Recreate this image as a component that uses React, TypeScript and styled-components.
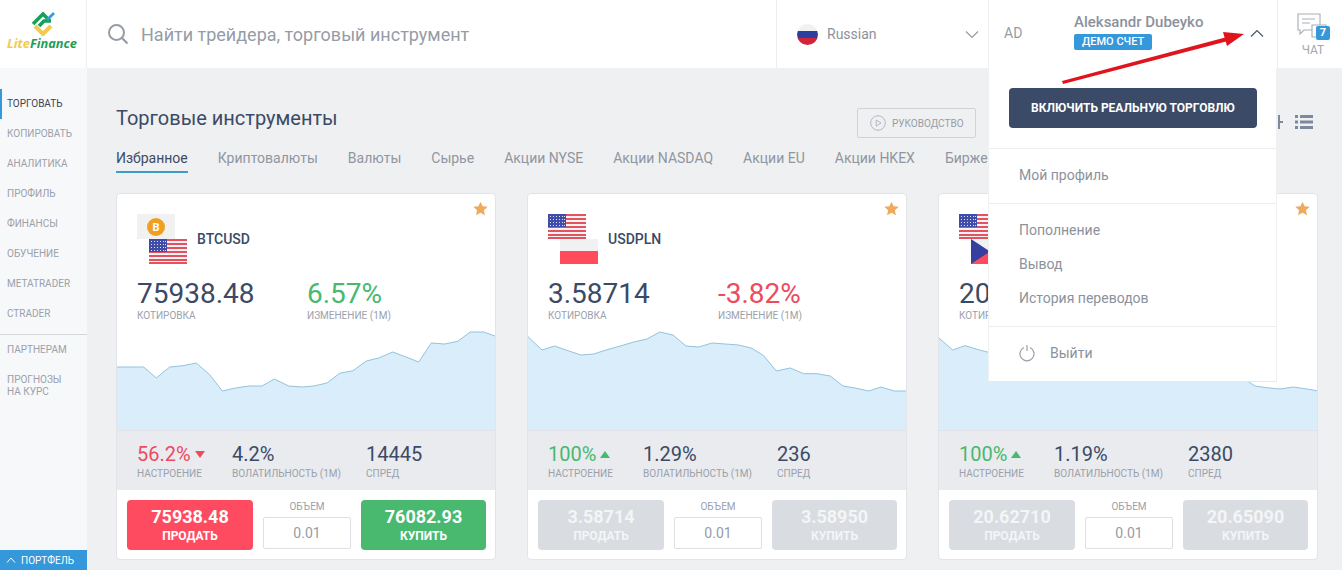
import React from "react";
import styled, { createGlobalStyle } from "styled-components";

const Global = createGlobalStyle`
  html, body { margin: 0; padding: 0; background: #fff; overflow: hidden; }
  * { box-sizing: border-box; }
  body { font-family: Roboto, "Liberation Sans", sans-serif; color: #3b4a66; }
`;

const Shell = styled.div`
  position: relative;
  width: 1342px;
  height: 570px;
  display: flex;
  flex-direction: column;
  overflow: hidden;
`;
const Header = styled.header`
  height: 68px;
  flex: none;
  display: flex;
  background: #fff;
  position: relative;
  z-index: 3;
`;
const LogoCell = styled.div`
  width: 87px;
  flex: none;
  border-right: 1px solid #eceef0;
  display: flex;
  flex-direction: column;
  align-items: center;
  padding-top: 11px;
`;
const LogoText = styled.div`
  font: italic 700 12.8px/13px "Open Sans", sans-serif;
  margin-top: 1px;
  margin-left: -2px;
  color: #1f9d57;
  span { color: #f3c94e; }
`;
const Search = styled.div`
  flex: 1;
  display: flex;
  align-items: center;
  padding-left: 20px;
  gap: 12px;
  font-size: 18px;
  color: #969ca6;
`;
const LangCell = styled.div`
  width: 212px;
  flex: none;
  border-left: 1px solid #eceef0;
  display: flex;
  align-items: center;
  padding-left: 20px;
  font-size: 14px;
  color: #8b929c;
`;
const LangFlag = styled.div`
  width: 21px;
  height: 21px;
  border-radius: 50%;
  margin-right: 9px;
  background: linear-gradient(#f1f1f3 0 33%, #2b3f9e 33% 66%, #d3243c 66%);
`;
const Chevron = styled.svg`
  width: 14px;
  height: 9px;
  flex: none;
`;
const LangChevron = styled(Chevron)`
  margin-left: auto;
  margin-right: 9px;
`;
const UserCell = styled.div`
  position: relative;
  width: 289px;
  flex: none;
  border-left: 1px solid #eceef0;
  display: flex;
  align-items: center;
  padding-left: 15px;
  font-size: 14px;
  color: #969ca6;
`;
const Initials = styled.div`
  width: 70px;
  flex: none;
  margin-top: -2px;
`;
const UserInfo = styled.div`
  display: flex;
  flex-direction: column;
  align-items: flex-start;
  margin-top: -5px;
`;
const UserName = styled.div`
  font-weight: 500;
  font-size: 15px;
  line-height: 18px;
  color: #8b929c;
`;
const Badge = styled.div`
  margin-top: 3px;
  background: #3498db;
  color: #fff;
  font-size: 11px;
  font-weight: 500;
  line-height: 16px;
  height: 16px;
  padding: 0 8px;
  border-radius: 2px;
`;
const UserChevron = styled(Chevron)`
  margin-left: auto;
  margin-right: 13px;
  margin-top: -2px;
`;
const ChatCell = styled.div`
  width: 65px;
  flex: none;
  border-left: 1px solid #eceef0;
  display: flex;
  flex-direction: column;
  align-items: center;
  padding: 13px 0 0 6px;
  font-size: 12px;
  color: #a2a8b1;
  line-height: 14px;
`;
const ChatIcon = styled.div`
  position: relative;
  align-self: flex-start;
  width: 34px;
  height: 28px;
  margin-left: 12px;
  margin-bottom: 2px;
  svg { display: block; }
`;
const ChatCount = styled.div`
  position: absolute;
  right: 0;
  bottom: 1px;
  width: 14px;
  height: 14px;
  border-radius: 2px;
  background: #3498db;
  color: #fff;
  font-size: 11px;
  font-weight: 700;
  line-height: 14px;
  text-align: center;
`;
const Dropdown = styled.div`
  position: absolute;
  top: 100%;
  left: -1px;
  right: 0;
  height: 314px;
  background: #fff;
  border: 1px solid #eef0f2;
  border-bottom-color: #e7e9ec;
  border-top: 0;
  display: flex;
  flex-direction: column;
`;
const DropSection = styled.div<{ $h: number }>`
  height: ${(p) => p.$h}px;
  flex: none;
  border-bottom: 1px solid #eceef0;
  padding: 0 30px 2px;
  display: flex;
  flex-direction: column;
  justify-content: center;
  gap: 14px;
  &:last-child { border-bottom: 0; }
`;
const RealButton = styled.div`
  margin: 20px 19px 0 20px;
  height: 40px;
  flex: none;
  background: #3b4a66;
  border-radius: 4px;
  color: #fff;
  font-size: 12px;
  font-weight: 700;
  display: flex;
  align-items: center;
  justify-content: center;
`;
const Rule = styled.div`
  height: 1px;
  background: #eceef0;
  margin-top: 20px;
  flex: none;
`;
const DropItem = styled.div`
  font-size: 14px;
  line-height: 20px;
  color: #8b929c;
  display: flex;
  align-items: center;
  gap: 15px;
`;
const Arrow = styled.svg`
  position: absolute;
  left: 1055px;
  top: 28px;
  width: 195px;
  height: 60px;
  z-index: 5;
`;
const Body = styled.div`
  flex: 1;
  display: flex;
  min-height: 0;
`;
const Sidebar = styled.nav`
  width: 87px;
  flex: none;
  background: #f7f8f9;
  padding-top: 21px;
  display: flex;
  flex-direction: column;
`;
const NavItem = styled.div<{ $active?: boolean; $tall?: boolean }>`
  height: ${(p) => (p.$tall ? 42 : 30)}px;
  padding-left: ${(p) => (p.$active ? 5 : 7)}px;
  border-left: ${(p) => (p.$active ? "2px solid #3498db" : "0")};
  color: ${(p) => (p.$active ? "#3b4454" : "#9aa1ab")};
  font-size: 10px;
  line-height: 12px;
  display: flex;
  align-items: center;
`;
const NavRule = styled.div`
  height: 1px;
  background: #d5d8dc;
  margin: 5px 0 0;
`;
const Portfolio = styled.div`
  margin-top: auto;
  height: 20px;
  background: #3498db;
  color: #fff;
  font-size: 10px;
  display: flex;
  align-items: center;
  padding-left: 6px;
  gap: 5px;
`;
const Main = styled.main`
  flex: 1;
  min-width: 0;
  background: #eff0f1;
  padding: 38px 0 0 29px;
  overflow: hidden;
`;
const Toolbar = styled.div`
  width: 1197px;
  height: 30px;
  display: flex;
  align-items: flex-start;
`;
const Title = styled.h1`
  flex: 1;
  margin: 0;
  font-size: 20px;
  font-weight: 400;
  line-height: 24px;
  color: #3b4a66;
`;
const Guide = styled.div`
  width: 119px;
  height: 30px;
  margin-top: 2px;
  border: 1px solid #cfd3d8;
  border-radius: 2px;
  display: flex;
  align-items: center;
  padding-left: 12px;
  gap: 6px;
  font-size: 10px;
  color: #969ca6;
`;
const ViewIcons = styled.div`
  margin-left: 289px;
  display: flex;
  gap: 12px;
  padding-top: 8px;
`;
const Tabs = styled.div`
  display: flex;
  gap: 30px;
  margin-top: 14px;
  white-space: nowrap;
`;
const Tab = styled.div<{ $active?: boolean }>`
  font-size: 14px;
  line-height: 16px;
  padding-bottom: 5px;
  border-bottom: 2px solid ${(p) => (p.$active ? "#3f9cc9" : "transparent")};
  color: ${(p) => (p.$active ? "#3b4a66" : "#8f96a1")};
`;
const Cards = styled.div`
  display: flex;
  gap: 31px;
  margin-top: 20px;
`;
const Card = styled.article`
  position: relative;
  width: 380px;
  height: 367px;
  flex: none;
  background: #fff;
  border: 1px solid #e2e4e7;
  border-radius: 4px;
  display: flex;
  flex-direction: column;
  overflow: hidden;
`;
const Star = styled.svg`
  position: absolute;
  top: 7px;
  right: 7px;
  width: 15px;
  height: 15px;
`;
const CardHead = styled.div`
  display: flex;
  align-items: center;
  gap: 10px;
  padding: 20px 0 0 20px;
`;
const FlagStack = styled.div`
  width: 50px;
  height: 50px;
  display: flex;
  flex-direction: column;
  svg { display: block; }
  svg:last-child { align-self: flex-end; }
`;
const Symbol = styled.div`
  font-size: 14px;
  font-weight: 500;
  color: #3b4a66;
`;
const QuoteRow = styled.div`
  display: flex;
  padding: 14px 0 0 20px;
`;
const Quote = styled.div<{ $w: number }>`
  width: ${(p) => p.$w}px;
  flex: none;
`;
const Big = styled.div<{ $tone?: string }>`
  font-size: 28px;
  line-height: 32px;
  color: ${(p) => p.$tone || "#3b4a66"};
`;
const Small = styled.div`
  font-size: 10px;
  line-height: 12px;
  color: #9aa1ab;
  white-space: nowrap;
`;
const Chart = styled.svg`
  display: block;
  width: 378px;
  height: 100px;
  margin-top: 8px;
  flex: none;
`;
const Stats = styled.div`
  height: 60px;
  flex: none;
  background: #e9ebee;
  border-top: 1px solid #dfe2e6;
  display: flex;
  padding: 12px 0 0 20px;
`;
const Value = styled.div<{ $tone?: string }>`
  font-size: 20px;
  line-height: 22px;
  color: ${(p) => p.$tone || "#3b4a66"};
  display: flex;
  align-items: center;
  gap: 4px;
  margin-bottom: 3px;
`;
const Tri = styled.span<{ $up: boolean }>`
  width: 0;
  height: 0;
  border-left: 5px solid transparent;
  border-right: 5px solid transparent;
  ${(p) =>
    p.$up
      ? "border-bottom: 7px solid #48b96f;"
      : "border-top: 7px solid #f04a5e;"}
`;
const Actions = styled.div`
  flex: 1;
  display: flex;
  padding: 10px 10px 0;
  gap: 10px;
`;
const Trade = styled.div<{ $bg: string; $w: number; $off?: boolean }>`
  width: ${(p) => p.$w}px;
  height: 50px;
  flex: none;
  border-radius: 4px;
  background: ${(p) => p.$bg};
  color: ${(p) => (p.$off ? "#f4f5f6" : "#fff")};
  display: flex;
  flex-direction: column;
  align-items: center;
  justify-content: center;
`;
const Price = styled.div`
  font-size: 18px;
  font-weight: 700;
  line-height: 22px;
`;
const Side = styled.div`
  font-size: 12px;
  font-weight: 700;
  line-height: 16px;
`;
const Volume = styled.div`
  width: 88px;
  flex: none;
  display: flex;
  flex-direction: column;
  align-items: center;
`;
const VolLabel = styled.div`
  font-size: 10px;
  line-height: 14px;
  color: #9aa1ab;
`;
const VolInput = styled.div`
  margin-top: 3px;
  width: 88px;
  height: 32px;
  border: 1px solid #dcdfe3;
  border-radius: 2px;
  background: #fff;
  font-size: 14px;
  line-height: 30px;
  text-align: center;
  color: #969ca6;
`;

const USFlag = () => (
  <svg width="38" height="25" viewBox="0 0 38 25">
    <rect width="38" height="25" fill="#f3f3f5" />
    {[0, 4, 8, 12, 16, 20].map((y) => (
      <rect key={y} y={y} width="38" height="2" fill="#e5525f" />
    ))}
    <rect y="23" width="38" height="2" fill="#e5525f" />
    <rect width="18" height="13" fill="#3f4da8" />
    {[2, 5, 8, 11].map((y) =>
      [2, 5, 8, 11, 14, 16].map((x) => <rect key={`${x}${y}`} x={x} y={y} width="1" height="1" fill="#dfe2f3" />)
    )}
  </svg>
);
const BTCFlag = () => (
  <svg width="38" height="25" viewBox="0 0 38 25">
    <rect width="38" height="25" fill="#f1f1f1" />
    <circle cx="19" cy="13" r="9" fill="#f0a020" />
    <text x="19" y="17" textAnchor="middle" fontFamily="Roboto" fontWeight="700" fontSize="11" fill="#fff">B</text>
  </svg>
);
const PLFlag = () => (
  <svg width="38" height="25" viewBox="0 0 38 25">
    <rect width="38" height="13" fill="#f1f1f1" />
    <rect y="12" width="38" height="13" fill="#ff4b5c" />
  </svg>
);
const CZFlag = () => (
  <svg width="38" height="25" viewBox="0 0 38 25">
    <rect width="38" height="13" fill="#f1f1f1" />
    <rect y="12" width="38" height="13" fill="#ff4b5c" />
    <polygon points="0,0 19,12.5 0,25" fill="#36409e" />
  </svg>
);

const toPath = (pts: number[][], off: number) =>
  pts.map(([x, y]) => `${((x - off) / 3).toFixed(1)},${((y - 427) / 3 + 2).toFixed(1)}`).join(" ");

const p1 = [[20,532],[100,532],[138,565],[178,532],[218,528],[258,520],[298,555],[336,604],[376,595],[415,589],[455,589],[492,568],[535,589],[575,592],[610,589],[650,580],[688,551],[728,543],[768,514],[805,505],[847,487],[887,502],[925,517],[963,460],[1003,463],[1042,455],[1080,427],[1120,427],[1160,441]];
const p2 = [[23,441],[65,481],[103,469],[143,483],[182,496],[220,493],[260,480],[300,469],[340,457],[380,448],[418,427],[458,436],[497,469],[535,472],[575,460],[615,463],[655,466],[695,476],[730,498],[768,544],[810,535],[850,552],[890,552],[930,559],[968,589],[1005,595],[1045,604],[1082,592],[1122,604],[1162,604]];
const p3 = [[27,445],[68,481],[105,468],[145,480],[184,490],[220,493],[260,480],[300,469],[340,457],[380,448],[418,427],[458,436],[497,469],[535,472],[575,460],[615,463],[655,466],[695,476],[730,498],[768,520],[810,535],[850,552],[890,552],[930,559],[975,589],[1010,594],[1050,598],[1090,592],[1130,598],[1165,604]];

const AreaChart = ({ pts, off }: { pts: number[][]; off: number }) => {
  const line = toPath(pts, off);
  return (
    <Chart viewBox="0 0 378 100" preserveAspectRatio="none">
      <polygon points={`0,100 ${line} 378,100`} fill="#d9edfa" />
      <polyline points={line} fill="none" stroke="#93c3dd" strokeWidth="1" />
    </Chart>
  );
};

type CardData = {
  top: React.ReactNode;
  bottom: React.ReactNode;
  symbol: string;
  quote: string;
  change: string;
  up: boolean;
  mood: string;
  vol: string;
  spread: string;
  sell: string;
  buy: string;
  active?: boolean;
  covered?: boolean;
  pts: number[][];
  off: number;
};

const cards: CardData[] = [
  { top: <BTCFlag />, bottom: <USFlag />, symbol: "BTCUSD", quote: "75938.48", change: "6.57%", up: true, mood: "56.2%", vol: "4.2%", spread: "14445", sell: "75938.48", buy: "76082.93", active: true, pts: p1, off: 20 },
  { top: <USFlag />, bottom: <PLFlag />, symbol: "USDPLN", quote: "3.58714", change: "-3.82%", up: false, mood: "100%", vol: "1.29%", spread: "236", sell: "3.58714", buy: "3.58950", pts: p2, off: 23 },
  { top: <USFlag />, bottom: <CZFlag />, symbol: "", quote: "20", change: "", up: false, mood: "100%", vol: "1.19%", spread: "2380", sell: "20.62710", buy: "20.65090", covered: true, pts: p3, off: 27 },
];

const GREEN = "#48b96f";
const RED = "#ee4a5e";

const chevron = (d: string, color: string) => (
  <path d={d} fill="none" stroke={color} strokeWidth="1.2" />
);

const InstrumentCard = ({ c }: { c: CardData }) => {
  const moodUp = !c.active;
  return (
    <Card>
      <Star viewBox="0 0 24 24">
        <polygon points="12,1 15.4,8.4 23.5,9.3 17.5,14.8 19.1,22.8 12,18.8 4.9,22.8 6.5,14.8 0.5,9.3 8.6,8.4" fill="#eeaa5e" />
      </Star>
      <CardHead>
        <FlagStack>
          {c.top}
          {c.bottom}
        </FlagStack>
        <Symbol>{c.symbol}</Symbol>
      </CardHead>
      <QuoteRow>
        <Quote $w={170}>
          <Big>{c.quote}</Big>
          <Small>{c.covered ? "КОТИРОВКА".slice(0, 5) : "КОТИРОВКА"}</Small>
        </Quote>
        <Quote $w={170}>
          <Big $tone={c.up ? GREEN : RED}>{c.change}</Big>
          <Small>{c.covered ? "" : "ИЗМЕНЕНИЕ (1М)"}</Small>
        </Quote>
      </QuoteRow>
      <AreaChart pts={c.pts} off={c.off} />
      <Stats>
        <Quote $w={95}>
          <Value $tone={moodUp ? GREEN : RED}>
            {c.mood}
            <Tri $up={moodUp} />
          </Value>
          <Small>НАСТРОЕНИЕ</Small>
        </Quote>
        <Quote $w={134}>
          <Value>{c.vol}</Value>
          <Small>ВОЛАТИЛЬНОСТЬ (1М)</Small>
        </Quote>
        <Quote $w={100}>
          <Value>{c.spread}</Value>
          <Small>СПРЕД</Small>
        </Quote>
      </Stats>
      <Actions>
        <Trade $w={126} $bg={c.active ? "#ff4b5f" : "#d9dce1"} $off={!c.active}>
          <Price>{c.sell}</Price>
          <Side>ПРОДАТЬ</Side>
        </Trade>
        <Volume>
          <VolLabel>ОБЪЕМ</VolLabel>
          <VolInput>0.01</VolInput>
        </Volume>
        <Trade $w={125} $bg={c.active ? "#48b96f" : "#d9dce1"} $off={!c.active}>
          <Price>{c.buy}</Price>
          <Side>КУПИТЬ</Side>
        </Trade>
      </Actions>
    </Card>
  );
};

export default function App() {
  return (
    <Shell>
      <Global />
      <Header>
        <LogoCell>
          <svg width="26" height="25" viewBox="0 0 26 25">
            <path d="M5 15 L13 23 L21 15" fill="none" stroke="#f3c94e" strokeWidth="4" />
            <path d="M3 13 L13 3 L17 7 M13 3 L20 10 M9 15 L14 10 L21 10" fill="none" stroke="#17a05a" strokeWidth="3.6" />
            <path d="M17 9 L24 2" fill="none" stroke="#2b9fd8" strokeWidth="2.6" />
          </svg>
          <LogoText>
            <span>Lite</span>Finance
          </LogoText>
        </LogoCell>
        <Search>
          <svg width="22" height="22" viewBox="0 0 22 22">
            <circle cx="9.5" cy="9.5" r="7.5" fill="none" stroke="#969ca6" strokeWidth="2" />
            <path d="M15 15 L20.5 20.5" stroke="#969ca6" strokeWidth="2.2" />
          </svg>
          Найти трейдера, торговый инструмент
        </Search>
        <LangCell>
          <LangFlag />
          Russian
          <LangChevron viewBox="0 0 14 9">{chevron("M1 1.5 L7 7.5 L13 1.5", "#969ca6")}</LangChevron>
        </LangCell>
        <UserCell>
          <Initials>AD</Initials>
          <UserInfo>
            <UserName>Aleksandr Dubeyko</UserName>
            <Badge>ДЕМО СЧЕТ</Badge>
          </UserInfo>
          <UserChevron viewBox="0 0 14 9">{chevron("M1 7.5 L7 1.5 L13 7.5", "#4a5568")}</UserChevron>
          <Dropdown>
            <RealButton>ВКЛЮЧИТЬ РЕАЛЬНУЮ ТОРГОВЛЮ</RealButton>
            <Rule />
            <DropSection $h={55}>
              <DropItem>Мой профиль</DropItem>
            </DropSection>
            <DropSection $h={123}>
              <DropItem>Пополнение</DropItem>
              <DropItem>Вывод</DropItem>
              <DropItem>История переводов</DropItem>
            </DropSection>
            <DropSection $h={54}>
              <DropItem>
                <svg width="16" height="17" viewBox="0 0 16 17">
                  <path d="M5 2.500 A7 7 0 1 0 11 2.500 M8 0 V6" fill="none" stroke="#9aa1ab" strokeWidth="1.2" />
                </svg>
                Выйти
              </DropItem>
            </DropSection>
          </Dropdown>
        </UserCell>
        <ChatCell>
          <ChatIcon>
            <svg width="34" height="28" viewBox="0 0 34 28">
              <path d="M2 1 H24 V17 H8 L4 21 V17 H2 Z" fill="#fff" stroke="#a7adb6" strokeWidth="1.1" />
              <path d="M6 6 H19 M6 10 H14" stroke="#a7adb6" strokeWidth="1.1" />
              <path d="M16 12 H30 V24 H16 Z" fill="#fff" stroke="#a7adb6" strokeWidth="1.1" />
            </svg>
            <ChatCount>7</ChatCount>
          </ChatIcon>
          ЧАТ
        </ChatCell>
      </Header>
      <Body>
        <Sidebar>
          <NavItem $active>ТОРГОВАТЬ</NavItem>
          <NavItem>КОПИРОВАТЬ</NavItem>
          <NavItem>АНАЛИТИКА</NavItem>
          <NavItem>ПРОФИЛЬ</NavItem>
          <NavItem>ФИНАНСЫ</NavItem>
          <NavItem>ОБУЧЕНИЕ</NavItem>
          <NavItem>METATRADER</NavItem>
          <NavItem>CTRADER</NavItem>
          <NavRule />
          <NavItem>ПАРТНЕРАМ</NavItem>
          <NavItem $tall>
            ПРОГНОЗЫ
            <br />
            НА КУРС
          </NavItem>
          <Portfolio>
            <svg width="10" height="6" viewBox="0 0 10 6">
              <path d="M1 5.500 L5 1 L9 5.500" fill="none" stroke="#fff" strokeWidth="1" />
            </svg>
            ПОРТФЕЛЬ
          </Portfolio>
        </Sidebar>
        <Main>
          <Toolbar>
            <Title>Торговые инструменты</Title>
            <Guide>
              <svg width="16" height="16" viewBox="0 0 16 16">
                <circle cx="8" cy="8" r="7.3" fill="none" stroke="#b4b9c0" />
                <path d="M6.200 5 L11 8 L6.200 11 Z" fill="none" stroke="#b4b9c0" />
              </svg>
              РУКОВОДСТВО
            </Guide>
            <ViewIcons>
              <svg width="18" height="16" viewBox="0 0 18 16">
                <path d="M13 1 H15 V7 H18 V9 H15 V15 H13 Z" fill="#7d8a9c" />
              </svg>
              <svg width="18" height="16" viewBox="0 0 18 16">
                <path d="M0 1 H3 V4 H0 Z M5 1 H18 V4 H5 Z M0 6.500 H3 V9.500 H0 Z M5 6.500 H18 V9.500 H5 Z M0 12 H3 V15 H0 Z M5 12 H18 V15 H5 Z" fill="#7d8a9c" />
              </svg>
            </ViewIcons>
          </Toolbar>
          <Tabs>
            <Tab $active>Избранное</Tab>
            <Tab>Криптовалюты</Tab>
            <Tab>Валюты</Tab>
            <Tab>Сырье</Tab>
            <Tab>Акции NYSE</Tab>
            <Tab>Акции NASDAQ</Tab>
            <Tab>Акции EU</Tab>
            <Tab>Акции HKEX</Tab>
            <Tab>Биржевые индексы</Tab>
          </Tabs>
          <Cards>
            {cards.map((c) => (
              <InstrumentCard key={c.spread} c={c} />
            ))}
          </Cards>
        </Main>
      </Body>
      <Arrow viewBox="0 0 195 60">
        <polygon points="7,53 172,9 173,13 8,56" fill="#e0141c" />
        <polygon points="189,6 168,4 172,18" fill="#e0141c" />
      </Arrow>
    </Shell>
  );
}
